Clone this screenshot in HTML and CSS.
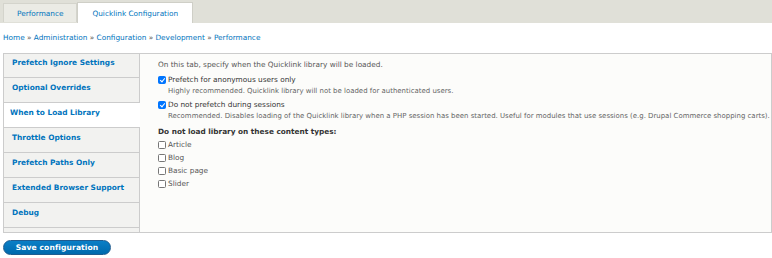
FILE: index.html
```html
<!DOCTYPE html>
<html>
<head>
<meta charset="utf-8">
<link rel="stylesheet" href="styles.css">
</head>
<body>
<div class="tabbar">
  <a class="tab">Performance</a>
  <a class="tab active">Quicklink Configuration</a>
</div>
<div class="breadcrumb">
  <a>Home</a> » <a>Administration</a> » <a>Configuration</a> » <a>Development</a> » <a>Performance</a>
</div>
<div class="vtabs">
  <ul class="vmenu">
    <li><a>Prefetch Ignore Settings</a></li>
    <li><a>Optional Overrides</a></li>
    <li class="sel"><a>When to Load Library</a></li>
    <li><a>Throttle Options</a></li>
    <li><a>Prefetch Paths Only</a></li>
    <li><a>Extended Browser Support</a></li>
    <li><a>Debug</a></li>
  </ul>
  <div class="pane">
    <p class="intro">On this tab, specify when the Quicklink library will be loaded.</p>
    <div class="item">
      <label><span class="cb on"></span>Prefetch for anonymous users only</label>
      <div class="desc">Highly recommended. Quicklink library will not be loaded for authenticated users.</div>
    </div>
    <div class="item">
      <label><span class="cb on"></span>Do not prefetch during sessions</label>
      <div class="desc">Recommended. Disables loading of the Quicklink library when a PHP session has been started. Useful for modules that use sessions (e.g. Drupal Commerce shopping carts).</div>
    </div>
    <div class="group">
      <div class="gtitle">Do not load library on these content types:</div>
      <label class="opt"><span class="cb"></span>Article</label>
      <label class="opt"><span class="cb"></span>Blog</label>
      <label class="opt"><span class="cb"></span>Basic page</label>
      <label class="opt"><span class="cb"></span>Slider</label>
    </div>
  </div>
</div>
<div class="actions"><button class="btn">Save configuration</button></div>
</body>
</html>
```
FILE: styles.css
```css
* { box-sizing: border-box; }
html, body { margin: 0; padding: 0; background: #fff; }
body {
  font-family: "DejaVu Sans", Verdana, sans-serif;
  font-size: 7.33px;
  color: #333;
  width: 772px;
  height: 258px;
  overflow: hidden;
}
a { color: #0074bd; text-decoration: none; }

.tabbar {
  height: 23px;
  background: #e0e0d8;
  display: flex;
  align-items: flex-end;
  padding-left: 3px;
  border-bottom: 1px solid #e0e0d8;
}
.tab {
  height: 19px;
  display: flex;
  align-items: center;
  padding: 0 13px;
  background: #ebebe5;
  border: 1px solid #d4d4cc;
  border-bottom: none;
}
.tab.active {
  background: #fff;
  border-color: #cfcfc7;
  padding: 0 14px;
  margin-bottom: -1px;
  height: 21px;
}

.breadcrumb {
  padding: 10px 3px 0;
  height: 30px;
  color: #555;
  line-height: 10px;
}

.vtabs {
  display: flex;
  margin: 0 0 0 3px;
  height: 180px;
}
.vmenu {
  flex: none;
  list-style: none;
  margin: 0;
  padding: 0;
  width: 136px;
  background: #f2f2f0;
  border: 1px solid #ccc;
  border-right: none;
}
.vmenu li {
  height: 25px;
  border-bottom: 1px solid #ccc;
  padding: 5px 0 0 8px;
  line-height: 10px;
  font-weight: bold;
  font-size: 7.4px;
  white-space: nowrap;
}
.vmenu li:first-child { height: 24px; padding-top: 4px; }
.vmenu li.sel {
  background: #fff;
  padding-left: 6px;
  margin-right: -1px;
  position: relative;
}
.pane {
  flex: 1;
  min-width: 0;
  overflow: hidden;
  background: #fcfcfa;
  border: 1px solid #ccc;
  padding: 6px 18px 0;
  color: #555;
}
.intro { margin: 0 0 5px; line-height: 10px; }
.item { margin-bottom: 3px; }
.item label { display: flex; align-items: center; line-height: 10px; color: #333; }
.desc { padding-left: 10px; line-height: 12px; color: #666; font-size: 0.95em; white-space: nowrap; }
.cb {
  display: inline-block;
  width: 8px;
  height: 8px;
  border: 1px solid #767676;
  border-radius: 1.5px;
  background: #fff;
  margin-right: 2px;
  flex: none;
}
.cb.on {
  background: #0075ff;
  border-color: #0075ff;
  position: relative;
}
.cb.on::after {
  content: "";
  position: absolute;
  left: 2px;
  top: 0px;
  width: 2px;
  height: 4px;
  border: solid #fff;
  border-width: 0 1.2px 1.2px 0;
  transform: rotate(40deg);
}
.group { margin-top: 4px; }
.gtitle { font-weight: bold; line-height: 12px; color: #333; margin-bottom: 0; }
.opt { display: flex; align-items: center; line-height: 13px; color: #555; }

.actions { padding: 7px 3px 0; }
.btn {
  font-family: "DejaVu Sans", Verdana, sans-serif;
  font-weight: bold;
  font-size: 7.6px;
  color: #fff;
  background: linear-gradient(#0a7fc7, #0069ac);
  border: 1px solid #1e5c90;
  border-radius: 10px;
  width: 108px;
  height: 15px;
  padding: 0;
  letter-spacing: 0.1px;
}
```
